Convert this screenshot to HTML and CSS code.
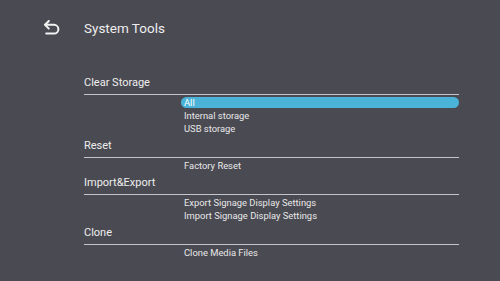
FILE: index.html
```html
<html>
	<head>
		<title>System Tools</title>
		<link rel="stylesheet" href="styles.css">
	</head>
	<body>
		<div class="topbar">
			<svg class="back" width="17" height="15" viewBox="0 0 17 15">
				<path d="M5.8 1 L2 4.8 L5.8 8.6" />
				<path d="M2.4 4.8 H11 A4.4 4.4 0 0 1 11 13.6 H3.2" />
			</svg>
			<div class="title">System Tools</div>
		</div>
		<div class="menu">
			<div class="section">
				<div class="head">Clear Storage</div>
				<div class="items">
					<div class="item selected">All</div>
					<div class="item">Internal storage</div>
					<div class="item">USB storage</div>
				</div>
			</div>
			<div class="section">
				<div class="head">Reset</div>
				<div class="items">
					<div class="item">Factory Reset</div>
				</div>
			</div>
			<div class="section">
				<div class="head">Import&amp;Export</div>
				<div class="items">
					<div class="item">Export Signage Display Settings</div>
					<div class="item">Import Signage Display Settings</div>
				</div>
			</div>
			<div class="section">
				<div class="head">Clone</div>
				<div class="items">
					<div class="item">Clone Media Files</div>
				</div>
			</div>
		</div>
	</body>
</html>
```

FILE: styles.css
```css
body{
	margin: 0;
	background-color: #4a4a52;
	color: #eeeeee;
	font-family: Roboto, "Liberation Sans", sans-serif;
	overflow: hidden;
}
.topbar{
	display: flex;
	align-items: flex-start;
	gap: 24px;
	padding: 20px 0 0 43px;
}
.back{
	margin-top: 0;
	fill: none;
	stroke: #f2f2f2;
	stroke-width: 2;
	stroke-linecap: round;
	stroke-linejoin: round;
}
.title{
	font-size: 13.5px;
	line-height: 17px;
}
.menu{
	margin: 36px 41px 0 84px;
}
.head{
	font-size: 11px;
	line-height: 13px;
	padding: 3px 0 5px 0;
	border-bottom: 1px solid #c4c4cc;
}
.items{
	display: flex;
	flex-direction: column;
	gap: 2px;
	padding: 2px 0 2px 97px;
}
.item{
	font-size: 9.4px;
	line-height: 11px;
	padding: 0 4px 0 3px;
	color: #e8e8e8;
}
.item.selected{
	background-color: #4ab3d7;
	border-radius: 6px;
	color: #ffffff;
}
```
